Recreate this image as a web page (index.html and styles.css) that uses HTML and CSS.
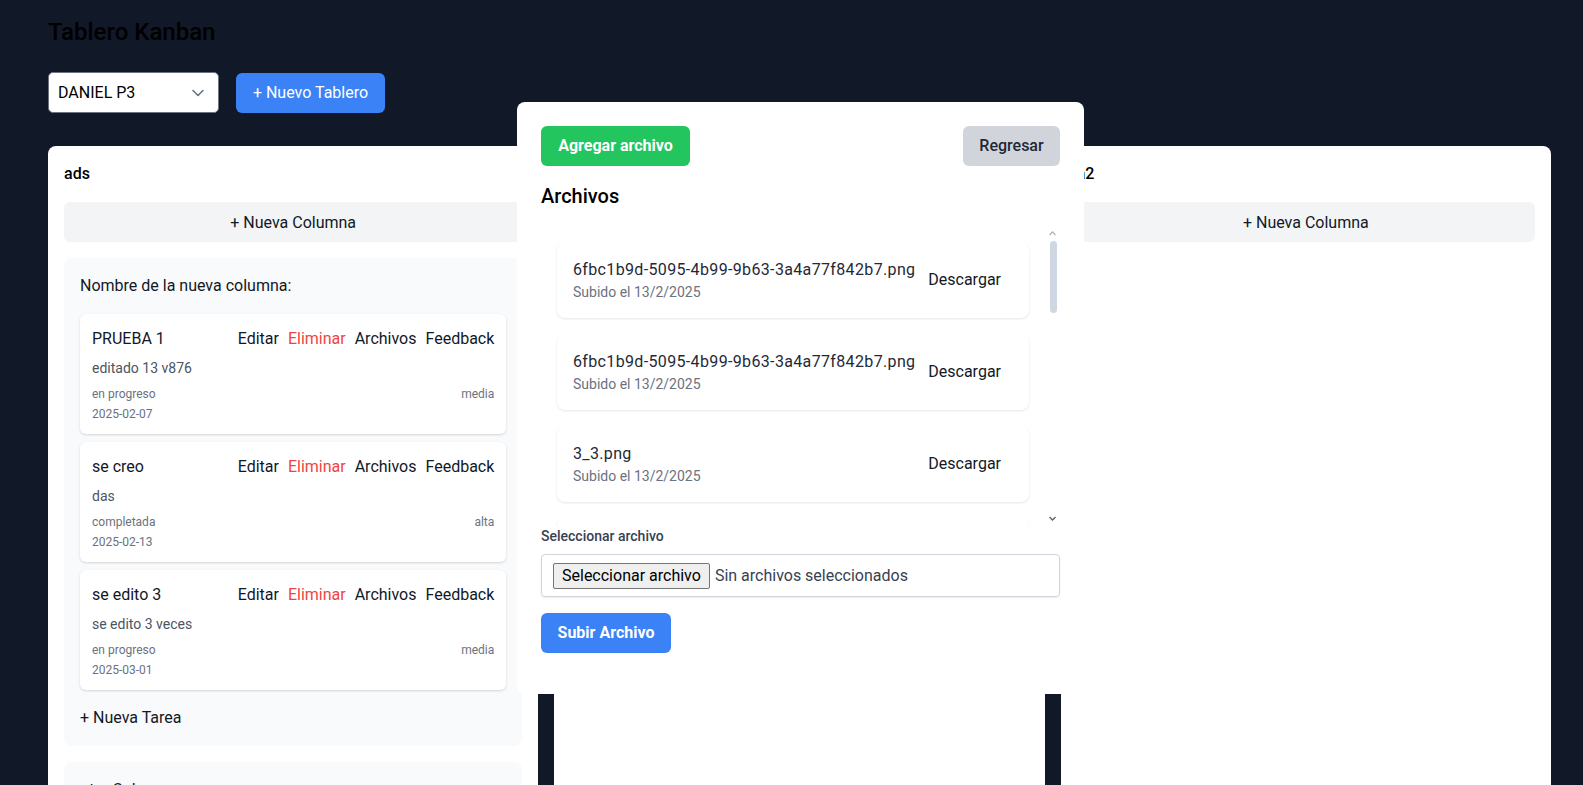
FILE: index.html
```html
<!DOCTYPE html>
<html lang="es">
<head>
<meta charset="utf-8">
<title>Tablero Kanban</title>
<link rel="stylesheet" href="styles.css">
</head>
<body>
<div class="page">
  <h1 class="title">Tablero Kanban</h1>
  <div class="toolbar">
    <div class="select">
      <span>DANIEL P3</span>
      <svg class="chev" width="12" height="8" viewBox="0 0 12 8"><path d="M1 1.5l5 5 5-5" fill="none" stroke="#6b7280" stroke-width="1.6" stroke-linecap="round" stroke-linejoin="round"/></svg>
    </div>
    <button class="btn btn-blue">+ Nuevo Tablero</button>
  </div>

  <div class="boards">
    <section class="board">
      <h2 class="board-title">ads</h2>
      <button class="new-col">+ Nueva Columna</button>
      <div class="columns">
        <div class="column">
          <h3 class="col-title">Nombre de la nueva columna:</h3>
          <div class="tasks">
            <article class="task">
              <div class="task-head">
                <span class="task-name">PRUEBA 1</span>
                <div class="task-actions"><span>Editar</span><span class="danger">Eliminar</span><span>Archivos</span><span>Feedback</span></div>
              </div>
              <p class="task-desc">editado 13 v876</p>
              <div class="task-meta"><span>en progreso</span><span>media</span></div>
              <div class="task-date">2025-02-07</div>
            </article>
            <article class="task">
              <div class="task-head">
                <span class="task-name">se creo</span>
                <div class="task-actions"><span>Editar</span><span class="danger">Eliminar</span><span>Archivos</span><span>Feedback</span></div>
              </div>
              <p class="task-desc">das</p>
              <div class="task-meta"><span>completada</span><span>alta</span></div>
              <div class="task-date">2025-02-13</div>
            </article>
            <article class="task">
              <div class="task-head">
                <span class="task-name">se edito 3</span>
                <div class="task-actions"><span>Editar</span><span class="danger">Eliminar</span><span>Archivos</span><span>Feedback</span></div>
              </div>
              <p class="task-desc">se edito 3 veces</p>
              <div class="task-meta"><span>en progreso</span><span>media</span></div>
              <div class="task-date">2025-03-01</div>
            </article>
          </div>
          <button class="new-task">+ Nueva Tarea</button>
        </div>
        <div class="column">
          <h3 class="col-title">otra Columna</h3>
        </div>
      </div>
    </section>

    <section class="board">
      <button class="new-col new-col-hidden">+ Nueva Columna</button>
    </section>

    <section class="board">
      <h2 class="board-title">a2</h2>
      <button class="new-col">+ Nueva Columna</button>
    </section>
  </div>

  <div class="modal">
    <div class="modal-top">
      <button class="btn btn-green">Agregar archivo</button>
      <button class="btn btn-gray">Regresar</button>
    </div>
    <h2 class="modal-title">Archivos</h2>
    <div class="list-wrap">
      <div class="file-list">
        <div class="file"><div class="file-info"><div class="file-name">6fbc1b9d-5095-4b99-9b63-3a4a77f842b7.png</div><div class="file-date">Subido el 13/2/2025</div></div><button class="dl">Descargar</button></div>
        <div class="file"><div class="file-info"><div class="file-name">6fbc1b9d-5095-4b99-9b63-3a4a77f842b7.png</div><div class="file-date">Subido el 13/2/2025</div></div><button class="dl">Descargar</button></div>
        <div class="file"><div class="file-info"><div class="file-name">3_3.png</div><div class="file-date">Subido el 13/2/2025</div></div><button class="dl">Descargar</button></div>
        <div class="file file-peek"></div>
      </div>
      <div class="scrollbar" aria-hidden="true">
        <svg class="sb-arrow" width="15" height="15" viewBox="0 0 15 15"><path d="M4.5 9l3-3 3 3" fill="none" stroke="#b5b5b5" stroke-width="1.3"/></svg>
        <div class="sb-track"><div class="sb-thumb"></div></div>
        <svg class="sb-arrow" width="15" height="15" viewBox="0 0 15 15"><path d="M4.5 6l3 3 3-3" fill="none" stroke="#5f5f5f" stroke-width="1.3"/></svg>
      </div>
    </div>
    <label class="field-label">Seleccionar archivo</label>
    <div class="file-input">
      <span class="fake-btn">Seleccionar archivo</span>
      <span class="fake-text">Sin archivos seleccionados</span>
    </div>
    <button class="btn btn-blue btn-bold upload">Subir Archivo</button>
  </div>
</div>
</body>
</html>
```

FILE: styles.css
```css
* { box-sizing: border-box; }

html, body {
  margin: 0;
  height: 100%;
  overflow: hidden;
}

body {
  background: #111827;
  font-family: Roboto, "Liberation Sans", sans-serif;
  color: #111827;
}

.page {
  position: relative;
  padding: 16px 32px 0 48px;
}

.title {
  margin: 0 0 24px;
  font-size: 24px;
  line-height: 32px;
  font-weight: 500;
  color: #000;
}

.toolbar {
  display: flex;
  align-items: center;
  gap: 17px;
  margin-bottom: 33px;
}

.select {
  width: 171px;
  height: 41px;
  background: #fff;
  border: 1px solid #6b7280;
  border-radius: 5px;
  display: flex;
  align-items: center;
  justify-content: space-between;
  padding: 0 14px 0 9px;
  font-size: 16px;
  color: #000;
}

.chev { display: block; }

.btn {
  border: 0;
  border-radius: 6px;
  font-family: inherit;
  font-size: 16px;
  line-height: 24px;
  padding: 8px 16px;
  cursor: pointer;
}

.btn-blue { background: #3b82f6; color: #fff; }
.btn-green { background: #22c55e; color: #fff; font-weight: 700; }
.btn-gray { background: #d1d5db; color: #1f2937; font-weight: 500; }
.btn-bold { font-weight: 700; }

.toolbar .btn-blue { width: 149px; height: 40px; padding: 0; }

.boards {
  display: grid;
  grid-template-columns: repeat(3, 1fr);
  gap: 16px;
  align-items: stretch;
}

.board {
  background: #fff;
  border-radius: 8px;
  padding: 16px;
  min-height: 700px;
}

.board-title {
  margin: 0 0 16px;
  font-size: 16px;
  line-height: 24px;
  font-weight: 500;
  color: #000;
}

.new-col {
  display: block;
  width: 100%;
  height: 40px;
  border: 0;
  border-radius: 6px;
  background: #f3f4f6;
  font-family: inherit;
  font-size: 16px;
  color: #111827;
  margin-bottom: 16px;
}

.new-col-hidden { margin-top: 40px; }

.columns {
  display: flex;
  flex-direction: column;
  gap: 16px;
}

.column {
  background: #f9fafb;
  border-radius: 8px;
  padding: 16px;
}

.col-title {
  margin: 0 0 16px;
  font-size: 16px;
  line-height: 24px;
  font-weight: 400;
  color: #111827;
}

.tasks {
  display: flex;
  flex-direction: column;
  gap: 8px;
  margin-bottom: 16px;
}

.task {
  background: #fff;
  border-radius: 6px;
  padding: 12px;
  box-shadow: 0 1px 3px rgba(0,0,0,0.12), 0 1px 2px -1px rgba(0,0,0,0.1);
}

.task-head {
  display: flex;
  justify-content: space-between;
  align-items: center;
  height: 24px;
}

.task-name {
  font-size: 16px;
  font-weight: 400;
  color: #111827;
}

.task-actions {
  display: flex;
  gap: 9px;
  font-size: 16px;
  color: #111827;
}

.danger { color: #ef4444; }

.task-desc {
  margin: 8px 0 0;
  font-size: 14px;
  line-height: 20px;
  color: #4b5563;
}

.task-meta {
  margin-top: 8px;
  display: flex;
  justify-content: space-between;
  font-size: 12px;
  line-height: 16px;
  color: #6b7280;
}

.task-date {
  margin-top: 4px;
  font-size: 12px;
  line-height: 16px;
  color: #6b7280;
}

.new-task {
  display: block;
  border: 0;
  background: transparent;
  padding: 0;
  font-family: inherit;
  font-size: 16px;
  line-height: 24px;
  color: #111827;
}

/* Modal */
.modal {
  position: absolute;
  top: 102px;
  left: 517px;
  width: 567px;
  height: 592px;
  background: #fff;
  border-radius: 8px;
  padding: 24px 24px 40px;
}

.modal-top {
  display: flex;
  justify-content: space-between;
  margin-bottom: 16px;
}

.modal-top .btn { height: 40px; }
.btn-green { width: 149px; padding: 0; }
.btn-gray { width: 97px; padding: 0; }

.modal-title {
  margin: 0 0 16px;
  font-size: 20px;
  line-height: 28px;
  font-weight: 500;
  color: #000;
}

.list-wrap {
  position: relative;
  height: 300px;
}

.file-list {
  height: 300px;
  overflow: hidden;
  padding: 16px 31px 16px 16px;
  display: flex;
  flex-direction: column;
  gap: 16px;
}

.scrollbar {
  position: absolute;
  top: 0;
  right: 0;
  width: 15px;
  height: 300px;
  display: flex;
  flex-direction: column;
}

.sb-arrow { display: block; flex: 0 0 15px; }

.sb-track {
  flex: 1;
  position: relative;
}

.sb-thumb {
  position: absolute;
  top: 0;
  left: 5px;
  width: 7px;
  height: 72px;
  border-radius: 4px;
  background: #cfd8e2;
}

.file {
  flex: 0 0 76px;
  display: flex;
  align-items: center;
  background: #fff;
  border-radius: 8px;
  padding: 16px;
  box-shadow: 0 1px 3px rgba(0,0,0,0.08), 0 1px 2px rgba(0,0,0,0.03);
}

.file-info { flex: 1; min-width: 0; }

.file-name {
  font-size: 16px;
  line-height: 24px;
  color: #1f2937;
  white-space: nowrap;
  letter-spacing: 0.35px;
}

.file-date {
  font-size: 14px;
  line-height: 20px;
  color: #6b7280;
}

.dl {
  border: 0;
  background: transparent;
  font-family: inherit;
  font-size: 16px;
  line-height: 24px;
  padding: 8px 12px;
  color: #111827;
}

.field-label {
  display: block;
  font-size: 14px;
  line-height: 20px;
  font-weight: 500;
  color: #374151;
  margin-bottom: 8px;
}

.file-input {
  height: 43px;
  border: 1px solid #d1d5db;
  border-radius: 4px;
  box-shadow: 0 1px 2px rgba(0,0,0,0.08);
  display: flex;
  align-items: center;
  padding: 0 11px;
  font-size: 16px;
}

.fake-btn {
  display: inline-block;
  height: 26px;
  line-height: 24px;
  padding: 0 8px;
  background: #efefef;
  border: 1px solid #767676;
  border-radius: 2px;
  color: #000;
  font-size: 16px;
}

.fake-text {
  margin-left: 5px;
  color: #374151;
}

.upload {
  margin-top: 16px;
  width: 130px;
  height: 40px;
  padding: 0;
}
```
